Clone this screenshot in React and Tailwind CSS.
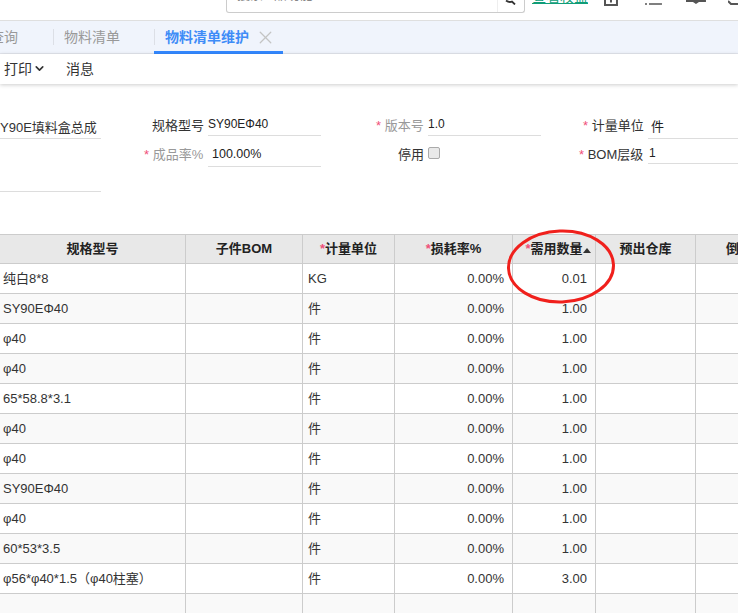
import React from 'react';
import { ChevronDown, X } from 'lucide-react';

const font = { fontFamily: '"Liberation Sans", "Noto Sans CJK SC", sans-serif' };

const rows = [
  { spec: '纯白8*8', unit: 'KG', loss: '0.00%', qty: '0.01' },
  { spec: 'SY90EΦ40', unit: '件', loss: '0.00%', qty: '1.00' },
  { spec: 'φ40', unit: '件', loss: '0.00%', qty: '1.00' },
  { spec: 'φ40', unit: '件', loss: '0.00%', qty: '1.00' },
  { spec: '65*58.8*3.1', unit: '件', loss: '0.00%', qty: '1.00' },
  { spec: 'φ40', unit: '件', loss: '0.00%', qty: '1.00' },
  { spec: 'φ40', unit: '件', loss: '0.00%', qty: '1.00' },
  { spec: 'SY90EΦ40', unit: '件', loss: '0.00%', qty: '1.00' },
  { spec: 'φ40', unit: '件', loss: '0.00%', qty: '1.00' },
  { spec: '60*53*3.5', unit: '件', loss: '0.00%', qty: '1.00' },
  { spec: 'φ56*φ40*1.5（φ40柱塞）', unit: '件', loss: '0.00%', qty: '3.00' },
  { spec: '', unit: '', loss: '', qty: '' },
];

const gridCols = 'grid grid-cols-[186px_117px_92px_118px_83px_100px_43px]';

const Star = () => <span className="text-[#f0507a]">*</span>;

const App = () => {
  return (
    <div style={font} className="relative w-[738px] h-[613px] overflow-hidden bg-white text-[13px] text-[#333]">
      {/* top bar, cut off by the window edge */}
      <div className="h-[21px] flex items-start border-b border-[#dfdfdf] overflow-hidden">
        <div className="ml-[226px] w-[300px] h-[13px] border border-t-0 border-[#cccccc] rounded-b-[3px] flex items-start overflow-hidden">
          <span className="pl-[10px] w-[270px] -mt-[13px] text-[13px] leading-[16px] text-[#888] whitespace-nowrap">搜索 / 品功能</span>
          <div className="h-full border-l border-[#eeeeee] pl-[7px]">
            <svg width="14" height="5" viewBox="0 0 14 5" fill="none">
              <path d="M1 0.5 C3 2 5 2.5 7 1.5 L10 4.5" stroke="#333" strokeWidth="1.8" />
            </svg>
          </div>
        </div>
        <span className="ml-[7px] w-[56px] h-[4px] border-b border-[#0f9d78] overflow-hidden text-[14px] leading-[14px] text-[#0f9d78] whitespace-nowrap flex items-end">
          <span className="-mb-[1px]">查看权益</span>
        </span>
        <svg className="ml-[16px]" width="14" height="6" viewBox="0 0 14 6" fill="none">
          <path d="M1 0 V5 H13 V0 M7 0 V2.5" stroke="#555" strokeWidth="2" />
        </svg>
        <svg className="ml-[27px]" width="17" height="6" viewBox="0 0 17 6" fill="none">
          <path d="M0 4 H2 M4 4 H17" stroke="#555" strokeWidth="1.5" />
        </svg>
        <svg className="ml-[24px]" width="20" height="5" viewBox="0 0 20 5" fill="#555">
          <path d="M0 0 H20 L20 2 H13 L10 4 L7 2 H0 Z" />
        </svg>
        <svg className="ml-[22px]" width="10" height="6" viewBox="0 0 10 6" fill="none">
          <path d="M0 1 L3 4 H10" stroke="#555" strokeWidth="2" />
        </svg>
      </div>

      {/* tabs */}
      <div className="h-[33px] bg-[#f0f4fc] border-b border-[#e3e6ee] flex items-stretch text-[14px]">
        <div className="w-[53px] overflow-hidden flex items-center text-[#999]">
          <span className="-ml-[10px] whitespace-nowrap">查询</span>
        </div>
        <div className="w-[101px] flex items-center text-[#999]">
          <div className="h-[16px] border-l border-[#dcdfe6] pl-[10px] whitespace-nowrap leading-[16px]">物料清单</div>
        </div>
        <div className="relative w-[129px] flex items-center pl-[11px] font-bold text-[#3e8cf7]">
          <span className="absolute left-0 top-[8px] h-[16px] border-l border-[#dcdfe6]" />
          <span className="whitespace-nowrap">物料清单维护</span>
          <X size={21} strokeWidth={1.5} className="ml-[6px] text-[#c4c4c4]" />
          <span className="absolute left-0 right-0 -bottom-px h-[3px] bg-[#3388ff]" />
        </div>
      </div>

      {/* toolbar */}
      <div className="relative h-[30px] flex items-center text-[14px] text-[#333] shadow-[0_1px_4px_rgba(0,0,0,0.2)]">
        <span className="ml-[4px] mt-[1px]">打印</span>
        <ChevronDown size={13} strokeWidth={3} className="ml-[1px] mb-[2px]" />
        <span className="ml-[20px] mt-[1px]">消息</span>
      </div>

      {/* form */}
      <div className="h-[150px] relative">
        <div className="absolute left-0 top-[34px] w-[101px] h-[21px] border-b border-[#dddddd] leading-[20px] whitespace-nowrap overflow-hidden">Y90E填料盒总成</div>
        <div className="absolute left-0 top-[85px] w-[101px] h-[23px] border-b border-[#dddddd]" />

        <div className="absolute left-[152px] top-[33px] whitespace-nowrap leading-[18px]">规格型号</div>
        <div className="absolute left-[208px] top-[31px] w-[113px] h-[21px] border-b border-[#dddddd] text-[12px] leading-[18px] text-[#222]">SY90EΦ40</div>

        <div className="absolute left-[144px] top-[62px] whitespace-nowrap leading-[18px] text-[#999]"><Star /> 成品率%</div>
        <div className="absolute left-[208px] top-[60px] w-[113px] h-[23px] border-b border-[#dddddd] pl-[4px] text-[12.5px] leading-[20px] text-[#222]">100.00%</div>

        <div className="absolute left-[376px] top-[33px] whitespace-nowrap leading-[18px] text-[#999]"><Star /> 版本号</div>
        <div className="absolute left-[428px] top-[31px] w-[113px] h-[21px] border-b border-[#dddddd] text-[12px] leading-[18px] text-[#222]">1.0</div>

        <div className="absolute left-[398px] top-[62px] whitespace-nowrap leading-[18px]">停用</div>
        <div className="absolute left-[428px] top-[63px] w-[12px] h-[12px] rounded-[2px] border border-[#aaaaaa] bg-[#e9e9e9]" />

        <div className="absolute left-[583px] top-[33px] whitespace-nowrap leading-[18px]"><Star /> 计量单位</div>
        <div className="absolute left-[648px] top-[34px] w-[90px] h-[21px] border-b border-[#dddddd] pl-[3px] leading-[18px] text-[#222]">件</div>

        <div className="absolute left-[579px] top-[62px] whitespace-nowrap leading-[18px]"><Star /> BOM层级</div>
        <div className="absolute left-[648px] top-[60px] w-[90px] h-[20px] border-b border-[#dddddd] pl-[1px] text-[12px] leading-[18px] text-[#222]">1</div>
      </div>

      {/* table */}
      <div className="border-t border-[#cccccc]">
        <div className={`${gridCols} h-[29px] bg-[#e8e8e8] font-bold text-[#222] border-b border-[#cccccc]`}>
          <div className="border-r border-[#cccccc] flex items-center justify-center">规格型号</div>
          <div className="border-r border-[#cccccc] flex items-center justify-center">子件BOM</div>
          <div className="border-r border-[#cccccc] flex items-center justify-center"><Star />计量单位</div>
          <div className="border-r border-[#cccccc] flex items-center justify-center"><Star />损耗率%</div>
          <div className="border-r border-[#cccccc] flex items-center justify-center pl-[8px]">
            <Star />需用数量
            <span className="w-0 h-0 border-l-[4px] border-r-[4px] border-b-[5px] border-l-transparent border-r-transparent border-b-[#333] mt-[3px]" />
          </div>
          <div className="border-r border-[#cccccc] flex items-center justify-center">预出仓库</div>
          <div className="flex items-center pl-[30px] whitespace-nowrap overflow-hidden">倒冲</div>
        </div>
        {rows.map((row, i) => (
          <div key={i} className={`${gridCols} h-[30px] border-b border-[#cccccc] ${i % 2 === 1 ? 'bg-[#f9f9f9]' : 'bg-white'}`}>
            <div className="border-r border-[#cccccc] flex items-center pl-[3px] whitespace-nowrap">{row.spec}</div>
            <div className="border-r border-[#cccccc]" />
            <div className="border-r border-[#cccccc] flex items-center pl-[5px]">{row.unit}</div>
            <div className="border-r border-[#cccccc] flex items-center justify-end pr-[8px]">{row.loss}</div>
            <div className="border-r border-[#cccccc] flex items-center justify-end pr-[8px]">{row.qty}</div>
            <div className="border-r border-[#cccccc]" />
            <div />
          </div>
        ))}
      </div>

      {/* red hand-drawn circle */}
      <svg className="absolute left-[500px] top-[222px]" width="125" height="86" viewBox="0 0 125 86" fill="none">
        <ellipse cx="61" cy="44.5" rx="52.5" ry="35.5" stroke="#f0201c" strokeWidth="3" transform="rotate(-2 61 44.5)" />
      </svg>
    </div>
  );
};

export default App;
